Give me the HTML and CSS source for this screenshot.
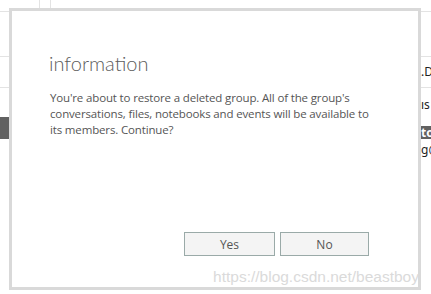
FILE: index.html
```html
<!DOCTYPE html>
<html lang="en">
<head>
    <meta charset="UTF-8">
    <title>Restore group</title>
    <link rel="stylesheet" href="styles.css">
</head>
<body>
    <div class="page">
        <div class="row head">
            <div class="cell c1"></div>
            <div class="cell c2"></div>
        </div>
        <div class="row r1"></div>
        <div class="row r2"><div class="side"><span class="side-text">.D<b class="orange">I</b></span></div></div>
        <div class="row r3"><div class="side"><span class="side-text">ıs</span></div></div>
        <div class="row r4">
            <div class="left-dark"></div>
            <div class="side dark"><span class="side-text">to</span></div>
        </div>
        <div class="row r5"><div class="side"><span class="side-text">g@</span></div></div>
    </div>

    <div class="overlay">
        <div class="dialog">
            <div class="title">information</div>
            <p class="message">You're about to restore a deleted group. All of the group's conversations, files, notebooks and events will be available to its members. Continue?</p>
            <div class="buttons">
                <button class="btn yes">Yes</button>
                <button class="btn no">No</button>
            </div>
        </div>
        <div class="watermark">https://blog.csdn.net/beastboy</div>
    </div>
</body>
</html>
```

FILE: styles.css
```css
* {
    margin: 0;
    padding: 0;
    box-sizing: border-box;
}

body {
    font-family: 'Open Sans', 'Noto Sans', sans-serif;
    background: #ffffff;
    color: #333;
    width: 431px;
    height: 294px;
    overflow: hidden;
}

/* page behind the dialog */
.page {
    width: 431px;
}

.row {
    display: flex;
    justify-content: space-between;
    border-bottom: 1px solid #e3e3e3;
}

.head {
    height: 12px;
    justify-content: flex-start;
}

.cell {
    height: 11px;
}

.c1 {
    width: 40px;
    border-right: 1px solid #e3e3e3;
}

.c2 {
    width: 11px;
    border-right: 1px solid #e3e3e3;
}

.r1 {
    height: 45px;
}

.r2 {
    height: 31px;
}

.r3 {
    height: 29px;
    border-bottom: none;
}

.r4 {
    height: 22px;
    border-bottom: none;
}

.r5 {
    height: 30px;
    border-bottom: none;
}

.side {
    width: 10px;
    margin-left: auto;
    overflow: hidden;
}

.side-text {
    display: block;
    white-space: nowrap;
    font-family: 'Noto Sans', sans-serif;
    font-size: 12px;
    line-height: 14px;
    color: #222;
}

.r2 .side {
    padding-top: 8px;
}

.r3 .side {
    padding-top: 10px;
}

.r5 .side {
    padding-top: 4px;
}

.orange {
    font-weight: normal;
    color: #e8731a;
}

.left-dark {
    width: 9px;
    background: #616161;
}

.side.dark {
    margin-top: 9px;
    background: #616161;
}

.side.dark .side-text {
    color: #fff;
    font-weight: bold;
    line-height: 13px;
}

/* modal */
.overlay {
    position: fixed;
    top: 0;
    left: 0;
    width: 431px;
    height: 294px;
    padding: 8px 10px 4px 9px;
}

.dialog {
    width: 412px;
    height: 282px;
    background: #fff;
    border: 3px solid #d9d9d9;
    padding: 40px 40px 31px 37px;
    display: flex;
    flex-direction: column;
}

.title {
    font-family: 'Lato', 'Open Sans', sans-serif;
    font-size: 20px;
    font-weight: 300;
    line-height: 24px;
    color: #5c5c5c;
}

.message {
    margin-top: 15px;
    font-size: 11.5px;
    letter-spacing: -0.15px;
    line-height: 16px;
    color: #555;
    padding-left: 1px;
}

.buttons {
    margin-top: auto;
    margin-right: 9px;
    display: flex;
    justify-content: flex-end;
    gap: 5px;
}

.btn {
    height: 24px;
    background: #f4f4f4;
    border: 1px solid #9aaaa8;
    font-family: 'Open Sans', 'Noto Sans', sans-serif;
    font-size: 12px;
    color: #555;
}

.yes {
    width: 91px;
}

.no {
    width: 89px;
}

.watermark {
    position: absolute;
    right: 12px;
    top: 267px;
    font-family: 'Liberation Sans', Arial, sans-serif;
    font-size: 15.5px;
    line-height: 20px;
    color: #dadada;
    white-space: nowrap;
}
```
